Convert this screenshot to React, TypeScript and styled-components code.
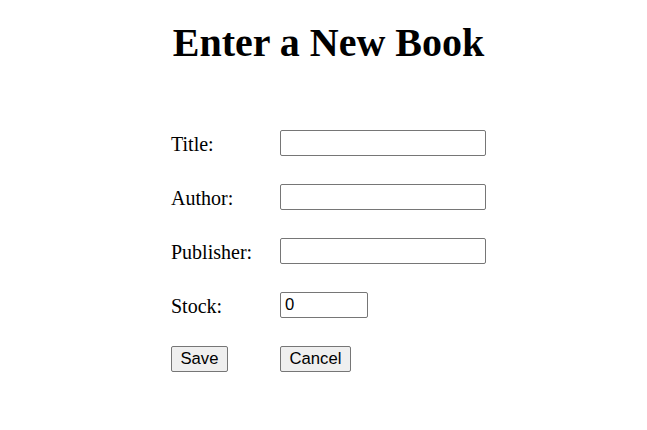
import React from "react";
import styled, { createGlobalStyle } from "styled-components";

const GlobalStyle = createGlobalStyle`
  html, body { margin: 0; padding: 0; background: #ffffff; }
  body {
    margin: 0 0 0 10px;
    font-family: "Liberation Serif", "Times New Roman", serif;
    color: #000000;
  }
`;

const Page = styled.div`
  display: flex;
  flex-direction: column;
  align-items: center;
  padding-top: 20px;
`;

const Heading = styled.h1`
  margin: 0;
  font-family: "Liberation Serif", "Times New Roman", serif;
  font-size: 40px;
  font-weight: bold;
  line-height: 46px;
`;

const Form = styled.form`
  display: grid;
  grid-template-columns: 109px 206px;
  row-gap: 28px;
  align-items: start;
  margin-top: 64px;
`;

const Label = styled.label`
  box-sizing: border-box;
  height: 26px;
  padding-top: 3px;
  font-family: "Liberation Serif", "Times New Roman", serif;
  font-size: 20px;
  line-height: 22px;
`;

const Input = styled.input<{ $w: number }>`
  box-sizing: border-box;
  width: ${(p) => p.$w}px;
  height: 26px;
  margin: 0;
  padding: 1px 4px;
  border: 1px solid #767676;
  border-radius: 2px;
  font-family: "Liberation Sans", Arial, sans-serif;
  font-size: 16.67px;
  color: #000;
  background: #fff;
  outline: none;
`;

const Button = styled.button`
  box-sizing: border-box;
  justify-self: start;
  height: 26px;
  margin: 0;
  padding: 0 8.5px;
  border: 1px solid #767676;
  border-radius: 2px;
  background: #efefef;
  font-family: "Liberation Sans", Arial, sans-serif;
  font-size: 16.67px;
  color: #000;
`;

export default function App() {
  return (
    <>
      <GlobalStyle />
      <Page>
        <Heading>Enter a New Book</Heading>
        <Form onSubmit={(e) => e.preventDefault()}>
          <Label htmlFor="title">Title:</Label>
          <Input id="title" type="text" $w={206} />
          <Label htmlFor="author">Author:</Label>
          <Input id="author" type="text" $w={206} />
          <Label htmlFor="publisher">Publisher:</Label>
          <Input id="publisher" type="text" $w={206} />
          <Label htmlFor="stock">Stock:</Label>
          <Input id="stock" type="text" defaultValue="0" $w={88} />
          <Button type="submit">Save</Button>
          <Button type="button">Cancel</Button>
        </Form>
      </Page>
    </>
  );
}
